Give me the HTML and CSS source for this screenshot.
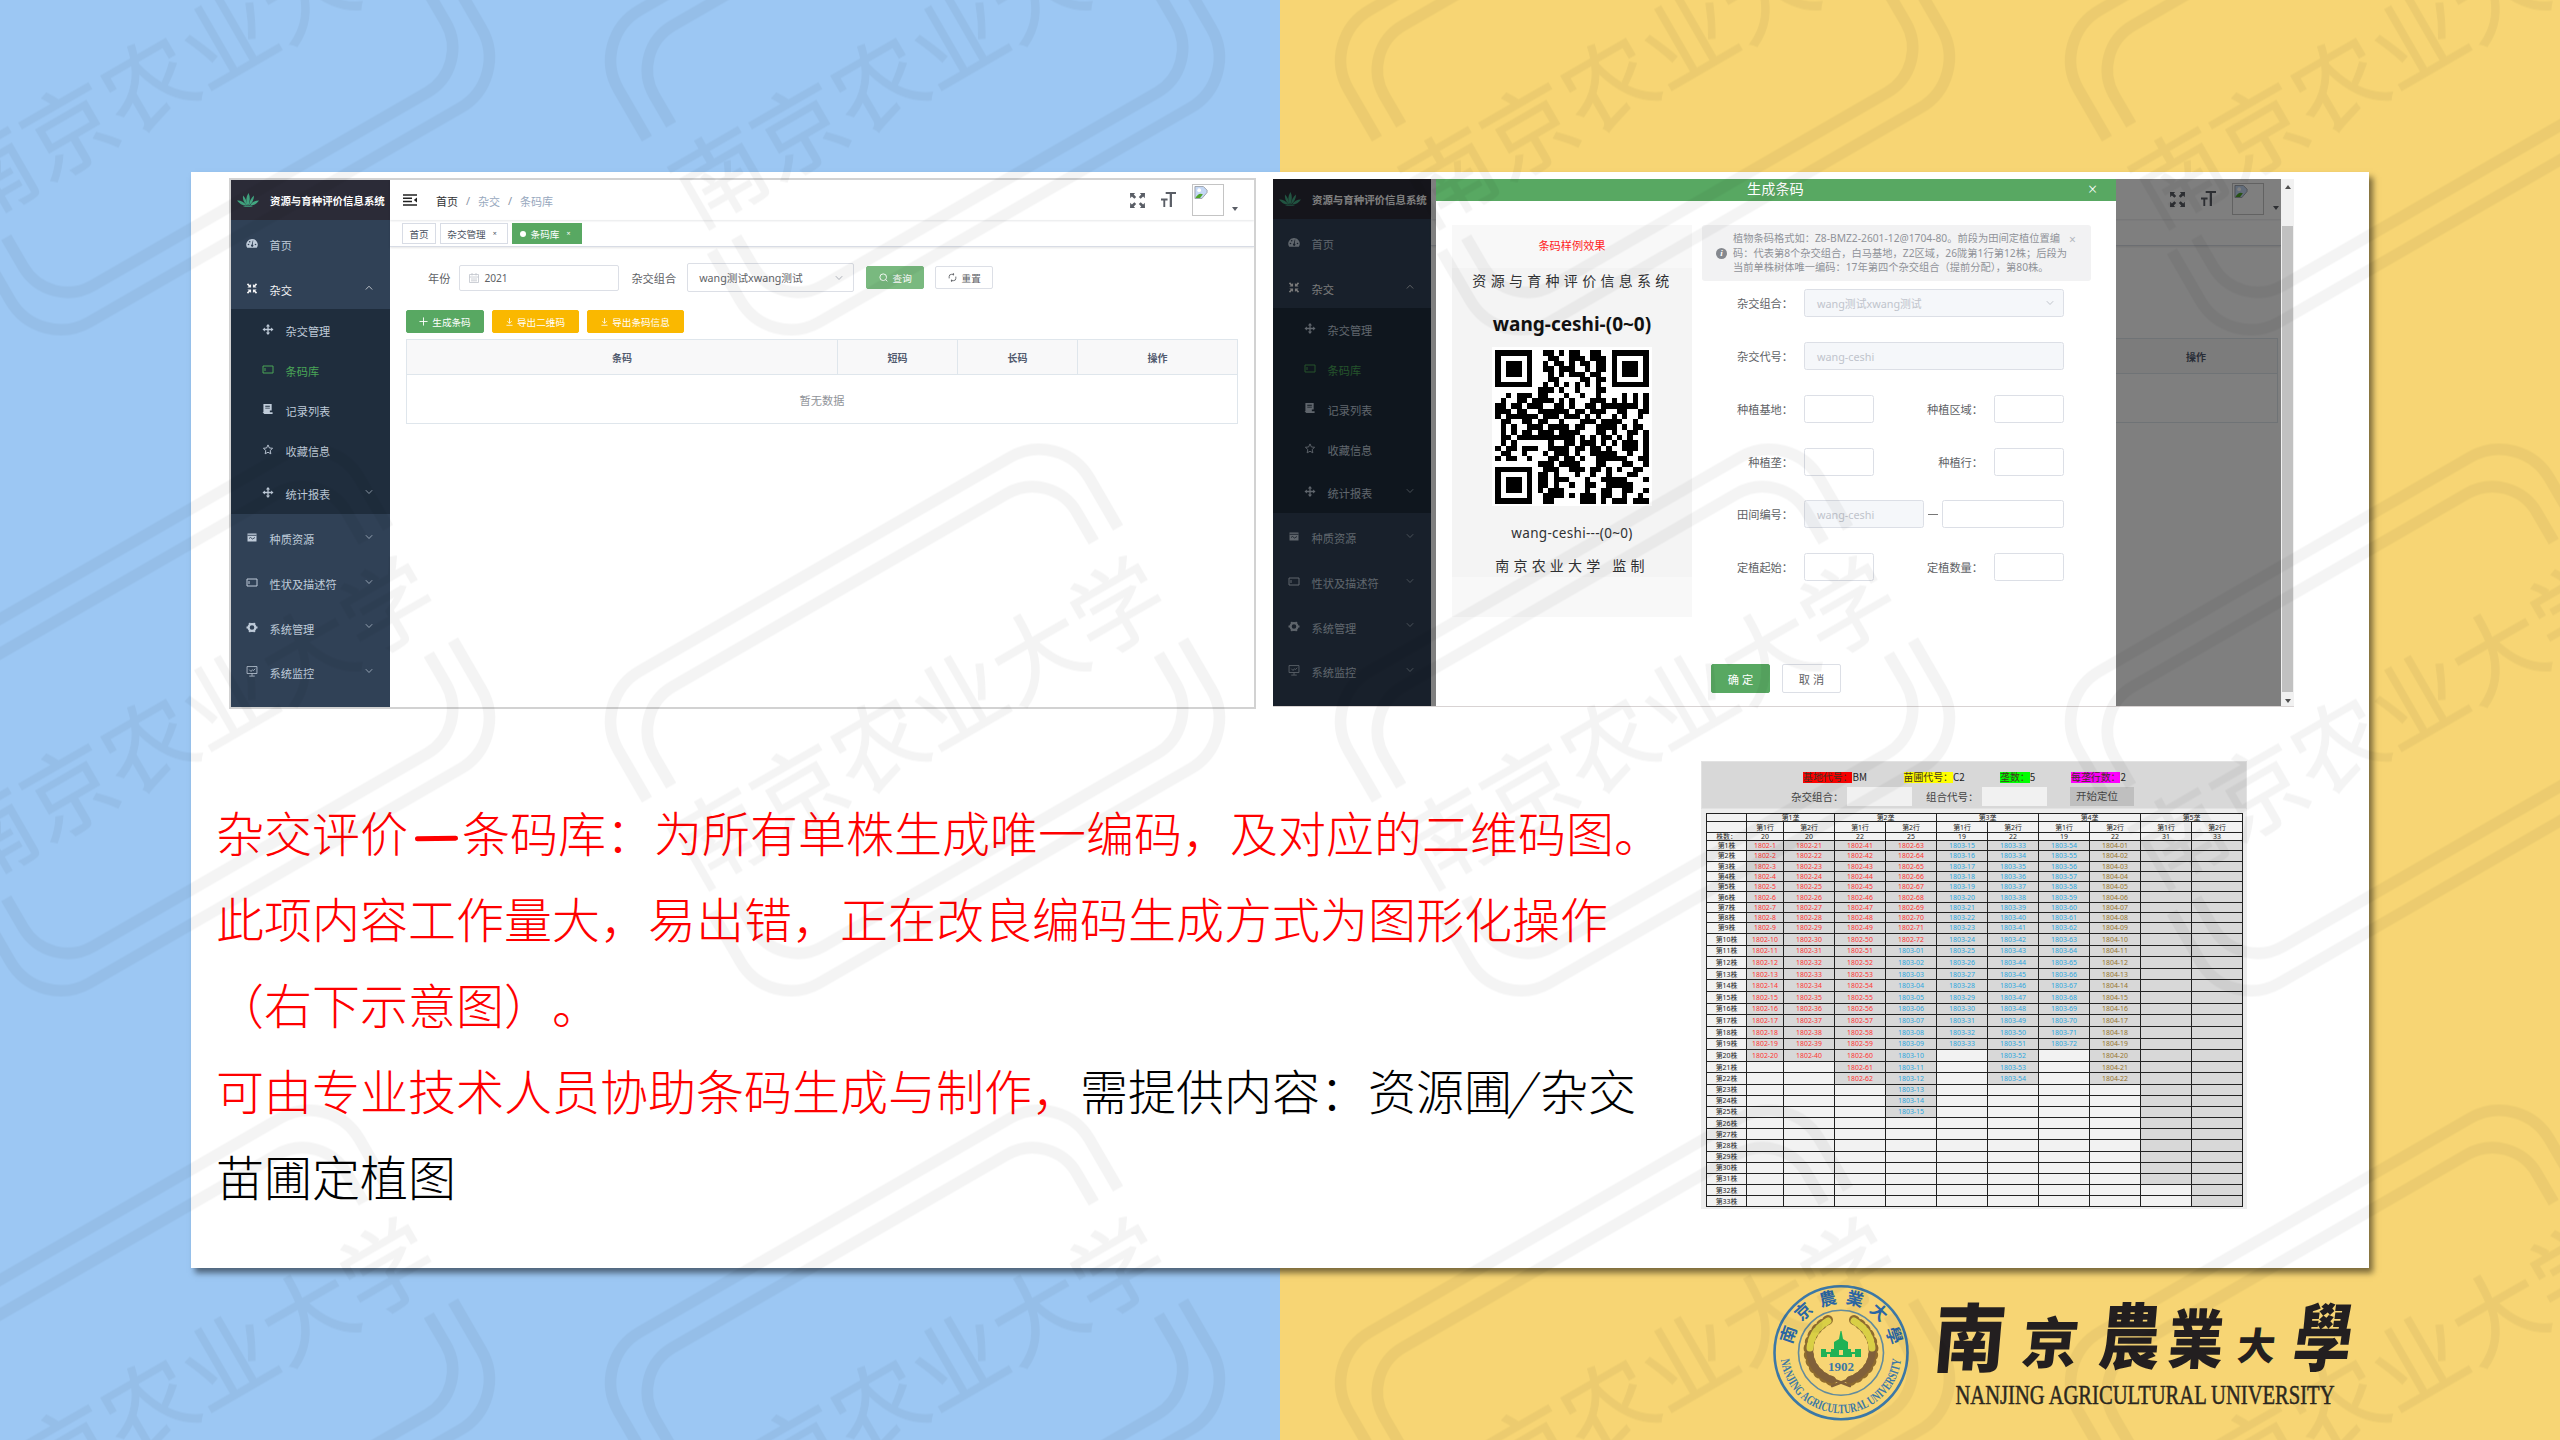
FILE: index.html
```html
<!DOCTYPE html>
<html lang="zh-CN">
<head>
<meta charset="utf-8">
<title>杂交评价—条码库</title>
<link rel="stylesheet" href="styles.css">
</head>
<body>
<svg class="defs" width="0" height="0" aria-hidden="true">
  <symbol id="i-leaf" viewBox="0 0 22 14"><g fill="#42a882"><path d="M10.500 12C8.500 8 9 4 11.500 0C13.500 4 13 8 11.500 12Z"/><path d="M9.500 12C6.500 9 5.500 6 6 2.500C8.500 5 9.800 8 10.200 12Z"/><path d="M12 12C12.500 8 14 5 17 2.500C17 6.500 15.500 9.500 12.500 12Z"/><path d="M9 12.500C5 12.500 2.500 10.500 0 7.500C4.500 7.500 7 9 9.500 12.500Z"/><path d="M13 12.500C15 9 18 7.500 22 7.500C20 10.500 17 12.500 13 12.500Z"/><path d="M6 13.200Q11 12 16 13.200Q11 14.500 6 13.200Z"/></g></symbol>
  <symbol id="i-dash" viewBox="0 0 12 10"><path fill="currentColor" d="M6 .5a5.6 5.6 0 0 0-4.8 8.7h9.6A5.600 5.600 0 0 0 6 .5z"/><g fill="#304156"><circle cx="2.500" cy="6" r=".8"/><circle cx="3.700" cy="3.200" r=".8"/><circle cx="9.500" cy="6" r=".8"/><path d="M6.800 2l.5 0-.6 4a1.200 1.200 0 1 1-1 0z"/></g></symbol>
  <symbol id="i-in" viewBox="0 0 12 12"><path fill="currentColor" d="M5 1v4H1l1.400-1.400L.4 1.700 1.700.4l2 2zM7 1v4h4L9.600 3.600l2-1.900L10.300.4l-2 2zM5 11V7H1l1.400 1.400-2 1.900 1.300 1.300 2-2zM7 11V7h4L9.600 8.400l2 1.900-1.300 1.300-2-2z"/></symbol>
  <symbol id="i-out" viewBox="0 0 16 16"><path fill="currentColor" d="M0 0h5.500L4 1.700l2.600 2.500-2 2L2 3.700.2 5.500zM16 0h-5.500L12 1.700 9.400 4.200l2 2L14 3.700l1.800 1.800zM0 16h5.500L4 14.300l2.600-2.500-2-2L2 12.300.2 10.500zM16 16h-5.500l1.500-1.700-2.600-2.500 2-2 2.600 2.500 1.800-1.800z"/></symbol>
  <symbol id="i-move" viewBox="0 0 12 12"><path fill="currentColor" d="M6 0l2.300 2.600H6.700v2.700h2.700V3.700L12 6 9.400 8.300V6.700H6.700v2.700h1.600L6 12 3.700 9.400h1.600V6.700H2.600v1.600L0 6l2.600-2.300v1.600h2.700V2.600H3.700z"/></symbol>
  <symbol id="i-card" viewBox="0 0 12 9"><path fill="none" stroke="currentColor" d="M1 1h10v7H1zM3 3v3"/></symbol>
  <symbol id="i-list" viewBox="0 0 12 12"><path fill="currentColor" d="M1 0h9v7H8v2h3v2H2L0 9h1zM3 2v1h5V2zM3 4v1h5V4z"/></symbol>
  <symbol id="i-star" viewBox="0 0 12 12"><path fill="none" stroke="currentColor" d="M6 1l1.500 3.300 3.500.4-2.600 2.400.7 3.600L6 9l-3.100 1.700.7-3.600L1 4.700l3.500-.4z"/></symbol>
  <symbol id="i-db" viewBox="0 0 12 10"><path fill="currentColor" d="M1.500 1h9v8h-9z"/><path fill="none" stroke="#304156" stroke-width=".9" d="M1.500 2.800h9M3 6l1.500-1 2 1.500L9 5"/></symbol>
  <symbol id="i-gear" viewBox="0 0 12 12"><circle cx="6" cy="6" r="3.700" fill="none" stroke="currentColor" stroke-width="2.400"/><path stroke="currentColor" stroke-width="2" d="M3 1l1 1.500M9 1L8 2.500M0 6h2M10 6h2M3 11l1-1.500M9 11L8 9.500"/></symbol>
  <symbol id="i-mon" viewBox="0 0 12 12"><path fill="none" stroke="currentColor" stroke-width=".9" d="M.6.6h10.800v7.600H.6zM6 8.200v2.500M3 11h6M3 4l2 2 1.500-2 1 1L9.500 3"/></symbol>
  <symbol id="i-down" viewBox="0 0 8 6"><path fill="none" stroke="currentColor" d="M.8 1.200L4 4.500l3.200-3.300"/></symbol>
  <symbol id="i-up" viewBox="0 0 8 6"><path fill="none" stroke="currentColor" d="M.8 4.500L4 1.200l3.200 3.300"/></symbol>
  <symbol id="i-fold" viewBox="0 0 14 12"><path stroke="currentColor" stroke-width="1.500" d="M0 1h14M0 4.300h9M0 7.600h9M0 11h14"/><path fill="currentColor" d="M14 3.500v5L10.800 6z"/></symbol>
  <symbol id="i-tt" viewBox="0 0 16 17"><path fill="currentColor" d="M5 0h11v2.200h-4.300V16H9.300V2.200H5zM0 7h7v2H4.500v7h-2V9H0z"/></symbol>
  <symbol id="i-broken" viewBox="0 0 14 14"><path fill="#c5d8f5" stroke="#9aa0a8" d="M.5.500h9l4 4v2.500L8 13.500H.5z"/><circle cx="5" cy="4.500" r="2" fill="#fff"/><path fill="#4fa52b" d="M1 13c2-4 5-6 8-4l-3 4z"/><path fill="#fff" d="M9 13.500l5-5.500v2L10.500 14z"/></symbol>
  <symbol id="i-cal" viewBox="0 0 10 10"><path fill="none" stroke="#c0c4cc" stroke-width=".8" d="M.5 1.500h9v8h-9zM.5 4h9M2 6h6M2 7.800h6M3 0v2.500M7 0v2.500"/></symbol>
  <symbol id="i-plus" viewBox="0 0 10 10"><path stroke="currentColor" d="M5 .5v9M.5 5h9"/></symbol>
  <symbol id="i-dl" viewBox="0 0 8 9"><path fill="none" stroke="currentColor" stroke-width=".9" d="M4 0v6M1.500 3.500L4 6l2.500-2.500M.5 8.300h7"/></symbol>
  <symbol id="i-find" viewBox="0 0 10 10"><circle cx="4.700" cy="4.700" r="3.700" fill="none" stroke="currentColor"/><path stroke="currentColor" d="M7.300 7.300l2 2"/></symbol>
  <symbol id="i-redo" viewBox="0 0 10 10"><path fill="none" stroke="currentColor" d="M1.300 6V4a2.500 2.500 0 0 1 2.500-2.500h3M6 .2v2.500M8.700 4v2a2.500 2.500 0 0 1-2.500 2.500h-3M4 9.800V7.300"/></symbol>
</svg>

<main class="card">
  <div class="shots">
    <section class="shot shot-list">
      <nav class="side">
        <div class="brand"><svg><use href="#i-leaf"/></svg><b>资源与育种评价信息系统</b></div>
        <div class="item"><svg><use href="#i-dash"/></svg><span>首页</span></div>
        <div class="item on"><svg><use href="#i-in"/></svg><span>杂交</span><svg class="arr"><use href="#i-up"/></svg></div>
        <div class="sub">
          <div class="item"><svg><use href="#i-move"/></svg><span>杂交管理</span></div>
          <div class="item active"><svg><use href="#i-card"/></svg><span>条码库</span></div>
          <div class="item"><svg><use href="#i-list"/></svg><span>记录列表</span></div>
          <div class="item"><svg><use href="#i-star"/></svg><span>收藏信息</span></div>
          <div class="item tall"><svg><use href="#i-move"/></svg><span>统计报表</span><svg class="arr"><use href="#i-down"/></svg></div>
        </div>
        <div class="item"><svg><use href="#i-db"/></svg><span>种质资源</span><svg class="arr"><use href="#i-down"/></svg></div>
        <div class="item"><svg><use href="#i-card"/></svg><span>性状及描述符</span><svg class="arr"><use href="#i-down"/></svg></div>
        <div class="item"><svg><use href="#i-gear"/></svg><span>系统管理</span><svg class="arr"><use href="#i-down"/></svg></div>
        <div class="item"><svg><use href="#i-mon"/></svg><span>系统监控</span><svg class="arr"><use href="#i-down"/></svg></div>
      </nav>
      <div class="main">
        <header class="topbar">
          <svg class="fold"><use href="#i-fold"/></svg>
          <div class="crumbs"><span class="home">首页</span><i>/</i><span>杂交</span><i>/</i><span>条码库</span></div>
          <div class="tools"><svg class="full"><use href="#i-out"/></svg><svg class="tt"><use href="#i-tt"/></svg><div class="avatar"><svg><use href="#i-broken"/></svg></div><i class="caret"></i></div>
        </header>
        <div class="tabs"><span class="tab t1">首页</span><span class="tab t2">杂交管理<i>×</i></span><span class="tab t3"><em></em>条码库<i>×</i></span></div>
        <div class="search">
          <label>年份</label><div class="field year"><svg><use href="#i-cal"/></svg>2021</div>
          <label class="l2">杂交组合</label><div class="field combo">wang测试xwang测试<svg><use href="#i-down"/></svg></div>
          <button class="btn find"><svg><use href="#i-find"/></svg>查询</button><button class="btn reset"><svg><use href="#i-redo"/></svg>重置</button>
        </div>
        <div class="actions"><button class="btn gen"><svg><use href="#i-plus"/></svg>生成条码</button><button class="btn warn w1"><svg><use href="#i-dl"/></svg>导出二维码</button><button class="btn warn w2"><svg><use href="#i-dl"/></svg>导出条码信息</button></div>
        <div class="table">
          <div class="thead"><b>条码</b><b>短码</b><b>长码</b><b>操作</b></div>
          <div class="empty">暂无数据</div>
        </div>
      </div>
    </section>

    <section class="shot shot-dialog">
      <nav class="side">
        <div class="brand"><svg><use href="#i-leaf"/></svg><b>资源与育种评价信息系统</b></div>
        <div class="item"><svg><use href="#i-dash"/></svg><span>首页</span></div>
        <div class="item on"><svg><use href="#i-in"/></svg><span>杂交</span><svg class="arr"><use href="#i-up"/></svg></div>
        <div class="sub">
          <div class="item"><svg><use href="#i-move"/></svg><span>杂交管理</span></div>
          <div class="item active"><svg><use href="#i-card"/></svg><span>条码库</span></div>
          <div class="item"><svg><use href="#i-list"/></svg><span>记录列表</span></div>
          <div class="item"><svg><use href="#i-star"/></svg><span>收藏信息</span></div>
          <div class="item tall"><svg><use href="#i-move"/></svg><span>统计报表</span><svg class="arr"><use href="#i-down"/></svg></div>
        </div>
        <div class="item"><svg><use href="#i-db"/></svg><span>种质资源</span><svg class="arr"><use href="#i-down"/></svg></div>
        <div class="item"><svg><use href="#i-card"/></svg><span>性状及描述符</span><svg class="arr"><use href="#i-down"/></svg></div>
        <div class="item"><svg><use href="#i-gear"/></svg><span>系统管理</span><svg class="arr"><use href="#i-down"/></svg></div>
        <div class="item"><svg><use href="#i-mon"/></svg><span>系统监控</span><svg class="arr"><use href="#i-down"/></svg></div>
      </nav>
      <div class="main">
        <header class="topbar"><div class="tools"><svg class="full"><use href="#i-out"/></svg><svg class="tt"><use href="#i-tt"/></svg><div class="avatar"><svg><use href="#i-broken"/></svg></div><i class="caret"></i></div></header>
        <div class="tabs"></div>
        <div class="table behind"><div class="thead"><b>操作</b></div><div class="empty"></div></div>
      </div>
      <div class="mask"></div>
      <div class="scroll"><i class="sa up"></i><div class="thumb"></div><i class="sa"></i></div>
      <div class="dialog">
        <div class="dhead"><span>生成条码</span><i>×</i></div>
        <div class="dbody">
          <div class="preview">
            <div class="p-red">条码样例效果</div>
            <div class="p-inner">
              <div class="p-sys">资源与育种评价信息系统</div>
              <div class="p-code">wang-ceshi-(0~0)</div>
              <svg class="qr" viewBox="-0.65 -0.65 30.3 30.1" shape-rendering="crispEdges"><path id="qr-path"/></svg>
              <div class="p-long">wang-ceshi---(0~0)</div>
              <div class="p-by">南京农业大学 监制</div>
            </div>
          </div>
          <div class="form">
            <div class="alert"><span class="info">i</span><p><span>植物条码格式如：Z8-BMZ2-2601-12@1704-80。前段为田间定植位置编</span><span>码：代表第8个杂交组合，白马基地，Z2区域，26陇第1行第12株；后段为</span><span>当前单株树体唯一编码：17年第四个杂交组合（提前分配），第80株。</span></p><i>×</i></div>
            <div class="row"><label>杂交组合：</label><div class="in wide off">wang测试xwang测试<svg><use href="#i-down"/></svg></div></div>
            <div class="row"><label>杂交代号：</label><div class="in wide off">wang-ceshi</div></div>
            <div class="row"><label>种植基地：</label><div class="in"></div><label class="r">种植区域：</label><div class="in"></div></div>
            <div class="row"><label>种植垄：</label><div class="in"></div><label class="r">种植行：</label><div class="in"></div></div>
            <div class="row"><label>田间编号：</label><div class="in mid off">wang-ceshi</div><em></em><div class="in rest"></div></div>
            <div class="row"><label>定植起始：</label><div class="in"></div><label class="r">定植数量：</label><div class="in"></div></div>
            <div class="dfoot"><button class="ok">确 定</button><button>取 消</button></div>
          </div>
        </div>
      </div>
    </section>
  </div>

  <div class="lower">
    <div class="copy">
      <div>杂交评价<span class="bar"></span>条码库：为所有单株生成唯一编码，及对应的二维码图。</div>
      <div>此项内容工作量大，易出错，正在改良编码生成方式为图形化操作</div>
      <div>（右下示意图）。</div>
      <div>可由专业技术人员协助条码生成与制作，<span class="k">需提供内容：资源圃<span class="slash">/</span>杂交</span></div>
      <div class="k">苗圃定植图</div>
    </div>
    <section class="plot">
      <div class="plot-head">
        <div class="tags"><span class="tg a"><mark>基地代号：</mark>BM</span><span class="tg b"><mark>苗圃代号：</mark>C2</span><span class="tg c"><mark>垄数：</mark>5</span><span class="tg d"><mark>每垄行数：</mark>2</span></div>
        <div class="query"><span>杂交组合：</span><i></i><span>组合代号：</span><i></i><b>开始定位</b></div>
      </div>
      <div class="grid" id="grid"></div>
    </section>
  </div>
</main>

<footer class="logo">
  <svg width="600" height="140" viewBox="1770 1284 600 140">
    <defs><path id="arcTop" d="M1791.500 1352.700a49.500 49.500 0 0 1 99 0"/><path id="arcBot" d="M1780.500 1352.700a60.500 60.500 0 0 0 121 0"/></defs>
    <g fill="none" stroke="#3c78a6"><circle cx="1841" cy="1352.700" r="66.500" stroke-width="2.600"/><circle cx="1841" cy="1352.700" r="42.500" stroke-width="1.600" opacity=".8"/></g>
    <text class="seal-cn"><textPath href="#arcTop" startOffset="8" textLength="140">南京農業大學</textPath></text>
    <text class="seal-en"><textPath href="#arcBot" startOffset="7" textLength="176" lengthAdjust="spacingAndGlyphs">NANJING AGRICULTURAL UNIVERSITY</textPath></text>
    <g fill="none" stroke-linecap="round">
      <path d="M1828 1320C1800 1336 1803 1371 1832 1381M1854 1320C1882 1336 1879 1371 1850 1381" stroke="#8d6b2f" stroke-width="10" stroke-dasharray="1 6"/>
      <path d="M1828 1321C1802 1336 1804 1370 1832 1380M1854 1321C1880 1336 1878 1370 1850 1380" stroke="#80603a" stroke-width="7"/>
      <path d="M1828 1321C1816 1328 1811 1337 1810 1348M1854 1321C1866 1328 1871 1337 1872 1348" stroke="#d9cf45" stroke-width="7" stroke-dasharray="4 3.500"/>
      <path d="M1832 1386l18-7M1832 1379l18 7" stroke="#80603a" stroke-width="2.500"/>
    </g>
    <path fill="#20b255" d="M1821 1357v-8h5v3h5v-3h3v-7l5-3 1.500-8h1l1.500 8 5 3v7h3v3h4v-3h6v8z"/><path fill="#f7d574" d="M1839 1350h4v5h-4zM1827 1354h3v3h-3zM1852 1354h3v3h-3z"/>
    <text class="year1902" x="1841" y="1371" text-anchor="middle">1902</text>
    <g class="brush">
      <text transform="translate(1932 1366) skewX(-5) scale(.98 1.030)" font-size="73">南</text>
      <text transform="translate(2020 1363) skewX(-6) scale(1.030 1)" font-size="55">京</text>
      <text transform="translate(2097 1363) skewX(-5) scale(.93 1.080)" font-size="66">農</text>
      <text transform="translate(2167 1363) skewX(-4) scale(.9 1.050)" font-size="61">業</text>
      <text transform="translate(2236 1360) skewX(-6)" font-size="38">大</text>
      <text transform="translate(2291 1365) skewX(-8) scale(.85 1.080)" font-size="68">學</text>
    </g>
    <text class="nau" x="1955.500" y="1403.500" textLength="379" lengthAdjust="spacingAndGlyphs">NANJING AGRICULTURAL UNIVERSITY</text>
  </svg>
</footer>

<svg class="watermark" width="2560" height="1440">
  <defs>
    <pattern id="wm" x="550" y="389.500" width="730" height="661" patternUnits="userSpaceOnUse">
      <g transform="translate(365 330.500) rotate(-30)">
        <g fill="none" stroke="#000" stroke-width="11.500">
          <path d="M-272-65V-122a58 58 0 0 1 58-58H214a58 58 0 0 1 58 58V-65M-244-65V-99a51 51 0 0 1 51-51H193a51 51 0 0 1 51 51V-65"/>
          <path d="M272 65V122a58 58 0 0 1-58 58H-214a58 58 0 0 1-58-58V65M244 65V99a51 51 0 0 1-51 51H-193a51 51 0 0 1-51-51V65"/>
        </g>
        <text x="2" y="38" text-anchor="middle">南京农业大学</text>
      </g>
    </pattern>
  </defs>
  <rect width="2560" height="1440" fill="url(#wm)"/>
</svg>
<script src="script.js"></script>
</body>
</html>
```
FILE: styles.css
```css
* { box-sizing: border-box; }
html, body { margin: 0; width: 2560px; height: 1440px; overflow: hidden; }
body {
  background: linear-gradient(90deg, #9cc7f3 50%, #f7d574 50%);
  font-family: "Noto Sans", "Noto Sans CJK SC", sans-serif;
  padding: 172px 0 0 191px;
  position: relative;
}
i, em { font-style: normal; }
.defs { position: absolute; }
svg { display: block; flex: none; }
button { font-family: inherit; padding: 0; }

.card { width: 2178px; height: 1096px; background: #fff; box-shadow: 4px 5px 6px rgba(0, 0, 0, .5); padding: 6px 0 0 26px; }
.shots { display: flex; gap: 17px; padding-left: 12px; height: 583px; align-items: flex-start; }
.shot { display: flex; position: relative; overflow: hidden; }
.shot-list { width: 1027px; height: 531px; border: 2px solid #d2d2d2; }
.shot-dialog { width: 1021px; height: 528px; margin-top: 1px; border-bottom: 1px solid #d8d3d3; }

/* sidebar */
.side { width: 159px; flex: none; background: #304156; color: #bfcbd9; font-size: 11.2px; }
.shot-dialog .side { width: 158px; }
.brand { height: 40px; background: #2b2b37; color: #fff; display: flex; align-items: center; gap: 11px; padding-left: 6px; font-size: 10.45px; white-space: nowrap; }
.brand svg { width: 22px; height: 14px; }
.item { height: 44.7px; padding: 8px 17px 0 15px; display: flex; align-items: center; line-height: 16px; }
.item svg { width: 12px; height: 11px; margin: -5px 11.500px 0 0; }
.item .arr { width: 8px; height: 6px; margin: -7px 0 0 auto; opacity: .7; }
.item.on { color: #f4f4f5; }
.sub { background: #1f2d3d; }
.sub .item { height: 40px; padding-left: 31px; padding-top: 5px; }
.sub .item.tall { height: 44.7px; padding-top: 7px; }
.sub .item.active { color: #4aa557; }

/* top bar */
.main { flex: 1; min-width: 0; background: #fff; }
.topbar { height: 40px; display: flex; align-items: center; padding-left: 13px; box-shadow: 0 1px 2px rgba(0, 21, 41, .1); }
.fold { width: 14px; height: 12px; color: #222; }
.crumbs { display: flex; font-size: 11px; color: #97a8be; margin-left: 19px; padding-top: 1px; }
.crumbs i { width: 20px; text-align: center; color: #8a94a5; }
.crumbs .home { color: #303133; }
.tools { margin-left: auto; display: flex; align-items: center; color: #5a5e66; padding-right: 16px; }
.full { width: 15px; height: 15px; }
.tt { width: 15px; height: 16px; margin: 0 16px; }
.avatar { width: 32px; height: 32px; border: 1px solid #c4c4c4; padding: 1px; }
.avatar svg { width: 14px; height: 13px; }
.caret { border: 3px solid transparent; border-top: 4px solid #5a5e66; margin: 20px 0 0 8px; }
.tabs { height: 27px; border-bottom: 1.500px solid #d8dce5; box-shadow: 0 1px 2px rgba(0, 0, 0, .1); display: flex; padding: 3px 0 0 12px; gap: 4px; font-size: 9.6px; color: #495060; }
.tab { height: 21px; border: 1px solid #d8dce5; display: flex; align-items: center; justify-content: center; }
.tab i { font-size: 7px; margin-left: 7px; }
.t1 { width: 34px; } .t2 { width: 68px; padding-right: 4px; }
.t3 { width: 70px; background: #58a862; border-color: #58a862; color: #fff; padding-right: 4px; }
.t3 em { width: 6px; height: 6px; border-radius: 50%; background: #fff; margin-right: 5px; }

/* search and table */
.search { display: flex; align-items: center; height: 29px; margin-top: 16px; padding-left: 38px; font-size: 11.2px; color: #606266; white-space: nowrap; }
.field { border: 1px solid #dcdfe6; border-radius: 2px; display: flex; align-items: center; }
.year { width: 160px; height: 26px; margin-left: 9px; padding-left: 9px; gap: 5px; font-size: 10.2px; }
.year svg { width: 10px; height: 10px; }
.l2 { margin-left: 12px; }
.combo { width: 167px; height: 29px; margin-left: 11px; padding: 0 10px 0 11px; font-size: 10.7px; }
.combo svg { width: 8px; height: 6px; margin-left: auto; color: #b4b8c0; }
.btn { border: 1px solid; border-radius: 2px; display: flex; align-items: center; justify-content: center; gap: 5px; font-size: 9.6px; color: #fff; height: 23px; }
.btn svg { width: 9px; height: 9px; }
.find { width: 58px; margin-left: 12px; background: #79b97f; border-color: #79b97f; }
.reset { width: 58px; margin-left: 11px; background: #fff; color: #606266; border-color: #dcdfe6; }
.actions { display: flex; margin-top: 18px; padding-left: 16px; gap: 8px; }
.actions .btn { gap: 4px; }
.gen { width: 78px; background: #58a862; border-color: #58a862; }
.warn { background: #fab800; border-color: #fab800; }
.warn svg { width: 7px; height: 8px; }
.w1 { width: 87px; } .w2 { width: 97px; }
.table { margin: 6px 0 0 16px; width: 832px; border: 1px solid #dfe6ec; font-size: 11.2px; }
.thead { display: grid; grid-template-columns: 431px 120px 120px 1fr; height: 35px; background: #f8f8f9; border-bottom: 1px solid #dfe6ec; font-size: 10px; color: #515a6e; }
.thead b { display: flex; align-items: center; justify-content: center; border-right: 1px solid #dfe6ec; }
.thead b:last-child { border: 0; }
.empty { height: 48px; display: flex; align-items: center; justify-content: center; color: #909399; padding-top: 2px; }

/* dialog shot */
.shot-dialog .main { padding-right: 13px; }
.shot-dialog .tools { padding-right: 2px; }
.shot-dialog .caret { margin-left: 9px; }
.behind { margin-top: 92px; width: 831px; }
.behind .thead { grid-template-columns: 162px; justify-content: end; }
.mask { position: absolute; inset: 0 13px 0 0; background: rgba(0, 0, 0, .5); }
.scroll { position: absolute; inset: 0 0 0 auto; width: 13px; background: #f1f1f1; display: flex; flex-direction: column; align-items: center; justify-content: space-between; padding: 6px 0 3px; }
.thumb { width: 11px; height: 466px; background: #c1c1c1; margin-top: 25px; }
.sa { border: 3px solid transparent; border-top: 4px solid #505050; border-bottom-width: 0; }
.sa.up { border-top-width: 0; border-bottom: 4px solid #505050; margin-bottom: 5px; }
.dialog { position: absolute; left: 163px; top: 0; width: 680px; bottom: 0; background: #fff; }
.dhead { height: 22px; background: #58a862; color: #fff; font-size: 14.2px; line-height: 20px; display: flex; padding-left: 311px; }
.dhead span { flex: 1; }
.dhead i { width: 28px; font-size: 16px; font-weight: 300; }
.dbody { display: flex; padding: 24px 0 0 16px; gap: 10px; }
.preview { width: 240px; height: 392px; background: #f8f8f8; text-align: center; color: #303133; }
.p-red { height: 43px; line-height: 41px; font-size: 11.2px; color: #f22; }
.p-inner { height: 309px; background: #f4f4f4; display: flex; flex-direction: column; align-items: center; white-space: nowrap; }
.p-sys { font-size: 14px; letter-spacing: 4.300px; line-height: 26px; padding-left: 2px; }
.p-code { font-size: 19px; font-weight: 700; line-height: 26px; margin-top: 17px; color: #111; }
.qr { width: 160px; height: 159px; background: #fff; margin-top: 10px; }
.p-long { font-size: 13.5px; letter-spacing: .3px; line-height: 20px; margin-top: 17px; }
.p-by { font-size: 14px; letter-spacing: 4.200px; line-height: 24px; margin-top: 11px; }
.form { width: 389px; }
.alert { height: 56px; background: #f2f2f3; border-radius: 3px; color: #909399; font-size: 10.25px; display: flex; align-items: center; padding-left: 14px; margin-bottom: 8px; }
.info { width: 11px; height: 11px; border-radius: 50%; background: #85888e; color: #fff; font: italic 700 9px/11px "Liberation Serif", serif; text-align: center; }
.alert p { margin: 0 0 0 6px; flex: none; width: 338px; white-space: nowrap; line-height: 14.5px; }
.alert p span { display: block; }
.alert i { align-self: flex-start; font-size: 12px; line-height: 29px; margin-left: -2px; color: #b4b8c0; }
.row { display: flex; align-items: center; height: 28.500px; margin-bottom: 24.300px; font-size: 11.2px; color: #606266; }
.row label { width: 91px; text-align: right; margin-right: 11px; white-space: nowrap; }
.row label.r { width: 109px; }
.in { width: 70px; height: 28px; border: 1px solid #dcdfe6; border-radius: 2.500px; }
.in.off { background: #f5f7fa; color: #c0c4cc; padding: 0 9px 0 12px; display: flex; align-items: center; font-size: 10.8px; }
.in svg { width: 8px; height: 6px; margin-left: auto; }
.wide { width: 260px; } .mid { width: 120px; } .rest { width: 122px; }
.row em { width: 10px; height: 1.500px; background: #777; margin: 0 4px; }
.dfoot { display: flex; gap: 12px; margin-top: 83px; padding-left: 9px; }
.dfoot button { width: 59px; height: 29px; border: 1px solid #dcdfe6; border-radius: 2px; background: #fff; color: #606266; font-size: 11.2px; }
.dfoot .ok { background: #58a862; border-color: #58a862; color: #fff; }

/* description */
.lower { display: flex; }
.copy { width: 1484px; padding-top: 27px; font-family: "Noto Sans CJK SC", sans-serif; font-weight: 300; font-size: 48px; line-height: 86px; text-spacing-trim: space-all; color: #f00; white-space: nowrap; margin-left: -1px; }
.copy + .plot { margin-left: 1px; }
.copy .k { color: #000; }
.bar { display: inline-block; width: 43px; height: 5px; margin: 0 4px 11px 7px; border-radius: 3px; background: #f00; transform: rotate(-1deg); }
.slash { display: inline-block; width: 28px; text-align: center; transform: skewX(-18deg); }

/* planting plot */
.plot { width: 546px; height: 448px; background: #ededed; color: #222; }
.plot-head { height: 48px; background: #d8d8d8; border: 1px solid #e2e2e2; font-family: "Noto Sans CJK SC", sans-serif; font-size: 9.9px; text-spacing-trim: space-all; }
.tags { height: 21px; padding: 10px 0 0 101px; display: flex; line-height: 11px; }
.tg { flex: none; white-space: nowrap; width: 100.500px; }
.tg mark { display: inline-block; height: 11px; color: #432; background: #f00; }
.tg.b { width: 96.500px; } .tg.c { width: 71px; }
.b mark { background: #ff0; } .c mark { background: #0f0; } .d mark { background: #f0f; }
.query { display: flex; align-items: center; height: 21px; margin-top: 3px; padding-left: 89px; font-size: 10.500px; color: #444; white-space: nowrap; }
.query span { width: 56px; }
.query i { width: 65px; height: 19px; background: #f1f1f1; margin-right: 14px; }
.query b { width: 64px; height: 19px; background: #bfbfbf; font-weight: 400; line-height: 18px; padding-left: 6px; margin-left: 9px; }
.grid {
  width: 537px; margin: 4px 0 0 5px; display: grid; border: solid #222; border-width: 1px 0 0 1px;
  grid-template-columns: 40px 37px repeat(8, 51px) 51px;
  grid-template-rows: 8px 11px 8px repeat(9, 10.290px) 12px repeat(11, 11.640px) repeat(12, 11.170px);
}
.grid span { border: solid #222; border-width: 0 1.200px 1.200px 0; background: #f2f2f2; font-size: 6.900px; line-height: 7px; display: flex; align-items: center; justify-content: center; white-space: nowrap; }
.grid .pair { grid-column: span 2; }
.grid .g { background: #d8d8d8; }
.grid .red { color: #f33; } .grid .blue { color: #2ba6de; } .grid .gold { color: #97752f; }

/* university mark */
.logo { margin: 16px 0 0 1579px; height: 140px; }
.seal-cn { font: 700 17px "Noto Sans CJK TC", sans-serif; fill: #2a66a5; }
.seal-en { font: 700 13px "Liberation Serif", serif; fill: #3c78a6; }
.year1902 { font: 700 13px "Liberation Serif", serif; fill: #3c78a6; }
.brush { font-family: "Noto Sans CJK TC", sans-serif; font-weight: 900; fill: #231f20; }
.nau { font: 27px "Liberation Serif", serif; fill: #2c2820; stroke: #2c2820; stroke-width: .5px; }

.watermark { position: absolute; left: 0; top: 0; opacity: .04; pointer-events: none; }
.watermark text { font: 400 92px "Noto Sans CJK SC", sans-serif; stroke: #000; stroke-width: 1px; }
```
FILE: script.js
```js
// QR modules, one string per row
const finder = ['1111111', '1000001', '1011101', '1011101', '1011101', '1000001', '1111111'];
const top7 = [
  '0110101100110', '0011001110111', '0101101011011', '0110111001011',
  '0010101110110', '0011000011011', '0101010101010'
];
const rest = [
  '00000000111010010001100000000', '00101110110001001001000010101', '01001101111010100011101010101',
  '11011011100110100110111111101', '11101100111111011011100110011', '10111111011101110101001010010',
  '01100110110010001110111100100', '01010011101111011001111010110', '01010110111011110001101001101',
  '01101111111111101010110101001', '01010000001001101110101011101', '10110111001111011011010011101',
  '01100100010111010011111001001', '10110010001101101001111110011', '00000000111011110001100011001'
];
const low7 = [
  '0011100111011010100110', '0110100010010010001100', '0110111000100111110001',
  '0110100100110011111000', '0101110000100110011001', '0011110101110110010010',
  '0011000001110101110111'
];
const rows = [
  ...top7.map((m, i) => finder[i] + '0' + m + '0' + finder[i]),
  ...rest,
  ...low7.map((m, i) => finder[i] + m)
];
let d = '';
rows.forEach((r, y) => [...r].forEach((b, x) => { if (b === '1') d += `M${x} ${y}h1v1h-1z`; }));
document.getElementById('qr-path').setAttribute('d', d);

// planting plot
const grid = document.getElementById('grid');
const cell = (text, cls) => {
  const s = document.createElement('span');
  s.textContent = text;
  if (cls) s.className = cls;
  grid.append(s);
};
const pad = n => String(n).padStart(2, '0');
const run = (prefix, cls, from, to, two) => Array.from({ length: to - from + 1 },
  (_, i) => [`${prefix}-${two ? pad(from + i) : from + i}`, cls]);
const blank = n => Array.from({ length: n }, () => ['', '']);
const cols = [
  run(1802, 'red', 1, 20), run(1802, 'red', 21, 40), run(1802, 'red', 41, 62),
  [...run(1802, 'red', 63, 72), ...run(1803, 'blue', 1, 15, true)],
  run(1803, 'blue', 15, 33), run(1803, 'blue', 33, 54), run(1803, 'blue', 54, 72),
  run(1804, 'gold', 1, 22, true), blank(31), blank(33)
];
cell('');
for (let i = 1; i <= 5; i++) cell(`第${i}垄`, 'pair');
cell('');
for (let i = 0; i < 10; i++) cell(`第${i % 2 + 1}行`);
cell('株数：');
[20, 20, 22, 25, 19, 22, 19, 22, 31, 33].forEach(n => cell(n));
for (let r = 0; r < 33; r++) {
  cell(`第${r + 1}株`);
  cols.forEach(c => (c[r] ? cell(c[r][0], 'g ' + c[r][1]) : cell('')));
}
```
